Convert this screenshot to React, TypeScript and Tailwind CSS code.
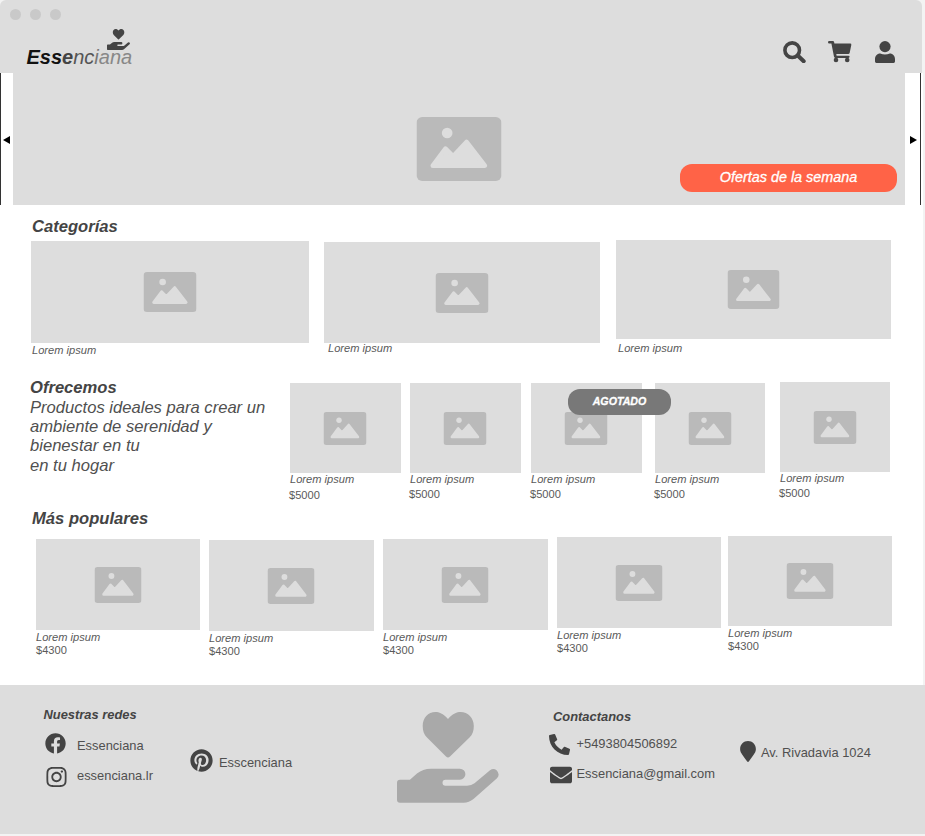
import React from "react";
import {
  FaEnvelope,
  FaFacebook,
  FaInstagram,
  FaMapMarker,
  FaPhoneAlt,
  FaPinterest,
} from "react-icons/fa";

function PictureIcon({ className }: { className: string }) {
  return (
    <svg viewBox="0 0 255 192" preserveAspectRatio="none" className={`shrink-0 -translate-x-[0.5px] ${className}`}>
      <rect width="255" height="192" rx="17" fill="#bababa" />
      <circle cx="92" cy="48" r="16" fill="#ddd" />
      <path
        d="M49 146 87 95 110 118 150 75 205 146Z"
        fill="#ddd"
        stroke="#ddd"
        strokeWidth="14"
        strokeLinejoin="round"
      />
    </svg>
  );
}

function GivingHand({ className }: { className: string }) {
  return (
    <svg viewBox="0 0 102 91" preserveAspectRatio="none" fill="currentColor" className={className}>
      <path d="M51 7C46 1.500 42 0 38.500 0C31 0 25.700 6 25.700 14C25.700 19 27 22.500 30 25.500L49 44.600Q51 46.600 53 44.600L72.500 25.500C75.500 22.500 76.800 19 76.800 14C76.800 6 71 0 63.500 0C60 0 56 1.500 51 7Z" />
      <path d="M3 67.700H12.900L20 61.500Q26 56.700 33.700 56.700H62.900A5.500 5.500 0 0 1 62.900 67.700H48.500A3 3 0 0 0 48.500 73.700H70Q74.500 73.700 77.500 71.300L93 58.200Q96.500 55.600 99.600 58.200Q103.500 62.300 100 66.300L76.500 87Q72 90.700 66.500 90.700H3Q0 90.700 0 87.700V70.700Q0 67.700 3 67.700Z" />
    </svg>
  );
}

function SearchIcon({ className }: { className: string }) {
  return (
    <svg viewBox="0 0 23 22" fill="none" stroke="currentColor" className={className}>
      <circle cx="9.2" cy="9.200" r="7.300" strokeWidth="3.600" />
      <path d="M15 14.800 20.700 20.200" strokeWidth="4" strokeLinecap="round" />
    </svg>
  );
}

function CartIcon({ className }: { className: string }) {
  return (
    <svg viewBox="0 0 24 22" fill="currentColor" className={className}>
      <path d="M1.200 0H4.800Q5.900 0 6.100 1.100L6.400 2.600H22.200Q23.600 2.600 23.300 4L21.700 11.800Q21.400 13 20.200 13H8.300L8.600 14.800H20.400Q21.600 14.800 21.600 15.800T20.400 16.900H7.400Q6.200 16.900 6 15.800L3.400 2.400H1.200A1.200 1.200 0 0 1 1.200 0Z" />
      <circle cx="8" cy="19" r="2.300" />
      <circle cx="19.200" cy="19" r="2.300" />
    </svg>
  );
}

function UserIcon({ className }: { className: string }) {
  return (
    <svg viewBox="0 0 20 22" fill="currentColor" className={className}>
      <circle cx="10" cy="5.600" r="5.600" />
      <path d="M5.200 12.600Q7.500 13.600 10 13.600T14.800 12.600C18 12.600 20 15.200 20 18.200V20.600Q20 22 18.600 22H1.400Q0 22 0 20.600V18.200C0 15.200 2 12.600 5.200 12.600Z" />
    </svg>
  );
}

type CardProps = {
  offset: string;
  image: string;
  icon: string;
  label: string;
  price?: string;
  priceClass?: string;
};

function Card({ offset, image, icon, label, price, priceClass = "" }: CardProps) {
  return (
    <article className={`shrink-0 text-[11.1px] leading-3 text-[#5a5a5a] ${offset}`}>
      <div className={`flex items-center justify-center bg-[#ddd] ${image}`}>
        <PictureIcon className={icon} />
      </div>
      <p className={`italic ${label}`}>Lorem ipsum</p>
      {price && <p className={priceClass}>{price}</p>}
    </article>
  );
}

const categories: CardProps[] = [
  { offset: "mt-px w-[278px]", image: "h-[102px]", icon: "h-10 w-[53px]", label: "mt-px pl-px" },
  { offset: "ml-[15px] mt-[2px] w-[276px]", image: "h-[101px]", icon: "h-10 w-[53px]", label: "-mt-px pl-1" },
  { offset: "ml-4 w-[275px]", image: "h-[99px]", icon: "h-[39px] w-[52px]", label: "mt-[3px] pl-[2px]" },
];

const offers: CardProps[] = [
  { offset: "mt-px w-[111px]", image: "h-[90px] pt-px", icon: "h-[33px] w-[43px]", label: "", price: "$5000", priceClass: "mt-1 -ml-px" },
  { offset: "ml-[9px] mt-px w-[111px]", image: "h-[90px]", icon: "h-[33px] w-[43px]", label: "", price: "$5000", priceClass: "mt-[3px] -ml-px" },
  { offset: "ml-[10px] mt-px w-[111px]", image: "h-[90px]", icon: "h-[33px] w-[43px]", label: "", price: "$5000", priceClass: "mt-[3px] -ml-px" },
  { offset: "ml-[13px] mt-px w-[110px]", image: "h-[90px]", icon: "h-[33px] w-[43px]", label: "", price: "$5000", priceClass: "mt-[3px] -ml-px" },
  { offset: "ml-[15px] w-[110px]", image: "h-[90px]", icon: "h-[33px] w-[43px]", label: "", price: "$5000", priceClass: "mt-[3px] -ml-px" },
];

const popular: CardProps[] = [
  { offset: "mt-[3px] w-[164px]", image: "h-[91px]", icon: "h-9 w-[47px]", label: "mt-px", price: "$4300", priceClass: "mt-px" },
  { offset: "ml-[9px] mt-1 w-[165px]", image: "h-[91px]", icon: "h-9 w-[47px]", label: "mt-px", price: "$4300", priceClass: "mt-px" },
  { offset: "ml-[9px] mt-[3px] w-[165px]", image: "h-[91px]", icon: "h-9 w-[47px]", label: "mt-px", price: "$4300", priceClass: "mt-px" },
  { offset: "ml-[9px] mt-px w-[164px]", image: "h-[91px]", icon: "h-9 w-[47px]", label: "mt-px", price: "$4300", priceClass: "mt-px" },
  { offset: "ml-[7px] w-[164px]", image: "h-[90px]", icon: "h-9 w-[47px]", label: "mt-px", price: "$4300", priceClass: "mt-px" },
];

function Header() {
  return (
    <header className="flex h-[73px] w-[922px] flex-col rounded-t-md bg-[#ddd]">
      <div className="flex gap-[9px] pl-[9.5px] pt-[9px]">
        <span className="size-[11px] rounded-full bg-[#c9c9c9]" />
        <span className="size-[11px] rounded-full bg-[#c9c9c9]" />
        <span className="size-[11px] rounded-full bg-[#c9c9c9]" />
      </div>
      <div className="flex items-start justify-between pl-[26.5px] pr-[27px]">
        <div className="pt-[9px]">
          <GivingHand className="ml-[80.500px] h-[21px] w-[23px] text-[#444]" />
          <p className="-mt-[4px] text-[20px] leading-[22px] italic text-[#888]">
            <b className="text-[#111]">Ess</b>
            <b className="text-[#444]">e</b>
            <span className="text-[#555]">nc</span>
            <span className="text-[#777]">i</span>ana
          </p>
        </div>
        <nav className="flex items-start pt-[21px] text-[#444]">
          <SearchIcon className="h-[22px] w-[23px]" />
          <CartIcon className="ml-[22px] h-[22px] w-[24px]" />
          <UserIcon className="ml-[23px] h-[22px] w-[20px]" />
        </nav>
      </div>
    </header>
  );
}

function Banner() {
  return (
    <section className="relative flex h-[132px] w-[921px] border-x border-[#333] bg-white">
      <button className="flex w-3 items-center pl-[2px]">
        <svg viewBox="0 0 7 8" className="mt-[2px] h-2 w-[7px]">
          <path d="M7 0V8L0 4Z" />
        </svg>
      </button>
      <div className="flex w-[892px] justify-center bg-[#ddd] pt-11">
        <PictureIcon className="h-16 w-[85px]" />
      </div>
      <button className="flex w-[15px] items-center pl-[5px]">
        <svg viewBox="0 0 7 8" className="mt-[2px] h-2 w-[7px]">
          <path d="M0 0V8L7 4Z" />
        </svg>
      </button>
      <span className="absolute left-[679px] top-[91px] h-7 w-[217px] rounded-xl bg-[#ff6347] text-center text-[14.4px] leading-[26px] italic text-white [-webkit-text-stroke:0.3px_white]">
        Ofertas de la semana
      </span>
    </section>
  );
}

function Footer() {
  return (
    <footer className="flex h-[149px] bg-[#ddd] text-[12.9px] leading-4 text-[#505050]">
      <section className="w-[190px] pl-[43.500px] pt-[22px]">
        <h3 className="font-bold italic text-[#444]">Nuestras redes</h3>
        <p className="mt-[10px] flex h-[21px] items-center pl-[1.5px]">
          <FaFacebook className="size-[21px] text-[#444]" />
          <span className="ml-[11px] mt-1">Essenciana</span>
        </p>
        <p className="mt-3 flex h-[22px] items-center pl-[1.5px]">
          <FaInstagram className="size-[23px] -translate-y-[0.5px] text-[#444]" />
          <span className="ml-[9px] -mt-[2px]">essenciana.lr</span>
        </p>
      </section>
      <section className="w-[207px] pt-16">
        <p className="flex items-start">
          <FaPinterest className="size-[23px] text-[#444]" />
          <span className="ml-1.5 mt-1.5">Esscenciana</span>
        </p>
      </section>
      <GivingHand className="mt-[27px] h-[91px] w-[102px] shrink-0 text-[#a9a9a9]" />
      <section className="ml-[50px] w-[191px] pt-6">
        <h3 className="pl-1 font-bold italic text-[#444]">Contactanos</h3>
        <p className="mt-[9px] flex h-[21px]">
          <FaPhoneAlt className="size-[21px] text-[#444]" />
          <span className="ml-[6.500px] mt-[2px]">+5493804506892</span>
        </p>
        <p className="mt-[9px] flex h-[22px] items-center pl-px">
          <FaEnvelope className="size-[22px] text-[#444]" />
          <span className="ml-[4.500px] -mt-[2px]">Essenciana@gmail.com</span>
        </p>
      </section>
      <section className="flex items-start pt-14">
        <FaMapMarker className="h-[21px] w-[16px] text-[#444]" />
        <span className="ml-[5px] mt-1">Av. Rivadavia 1024</span>
      </section>
    </footer>
  );
}

export default function App() {
  return (
    <div className="h-[836px] w-[925px] overflow-hidden bg-[#f3f3f3] font-['Liberation_Sans',Arial,sans-serif]">
      <Header />
      <main className="h-[612px] w-[923px] bg-white text-[#444]">
        <Banner />
        <section className="h-[172px] pl-[31px] pt-3">
          <h2 className="pl-px text-[16.6px] leading-5 font-bold italic">Categorías</h2>
          <div className="mt-[3px] flex items-start">
            {categories.map((card, i) => (
              <Card key={i} {...card} />
            ))}
          </div>
        </section>
        <section className="flex h-[132px] items-start pl-[30px]">
          <div className="w-[260px] pt-px text-[16.6px] leading-[19.2px] italic">
            <h2 className="leading-5 font-bold">Ofrecemos</h2>
            <p className="text-[#505050]">
              Productos ideales para crear un
              <br />
              ambiente de serenidad y
              <br />
              bienestar en tu
            </p>
            <p className="mt-[0.500px] text-[#505050]">en tu hogar</p>
          </div>
          <div className="relative mt-[5px] flex items-start">
            {offers.map((card, i) => (
              <Card key={i} {...card} />
            ))}
            <span className="absolute left-[278px] top-[7px] h-[26px] w-[103px] rounded-xl bg-[#787878] text-center text-[10.67px] leading-[25px] font-bold italic text-white [-webkit-text-stroke:0.3px_white]">
              AGOTADO
            </span>
          </div>
        </section>
        <section className="pl-8">
          <h2 className="text-[16.6px] leading-5 font-bold italic">Más populares</h2>
          <div className="mt-[7px] flex items-start pl-1">
            {popular.map((card, i) => (
              <Card key={i} {...card} />
            ))}
          </div>
        </section>
      </main>
      <Footer />
    </div>
  );
}
